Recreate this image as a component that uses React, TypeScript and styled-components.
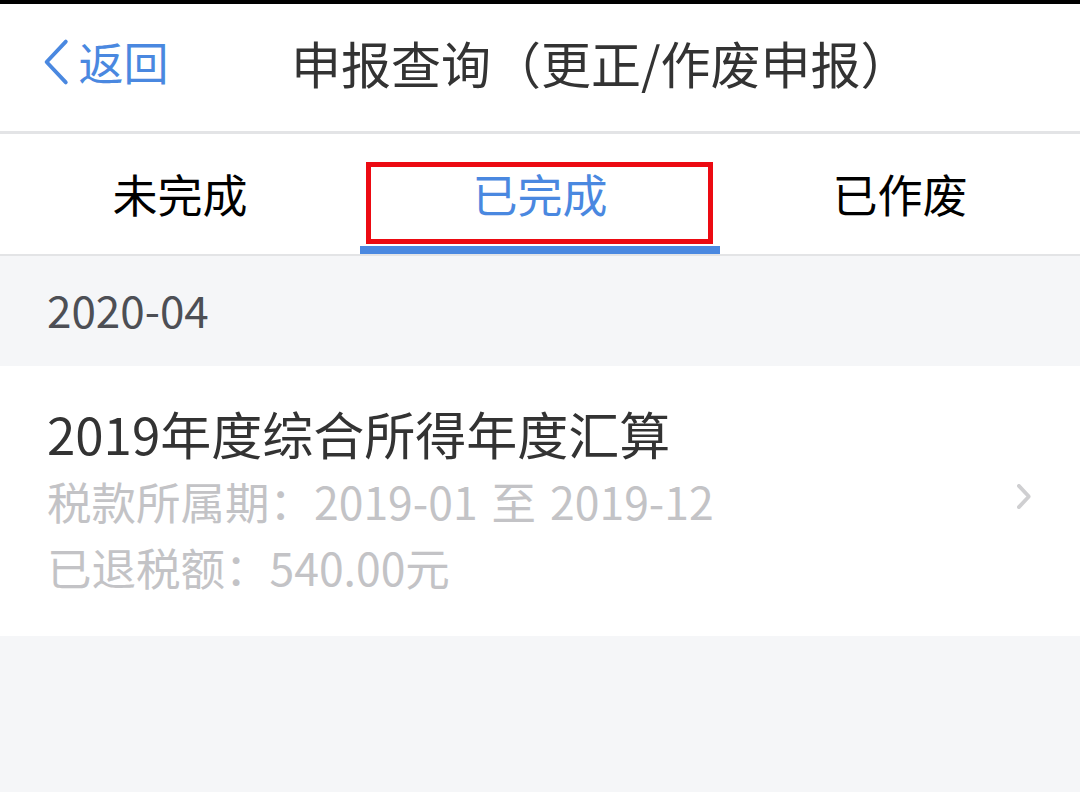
import React, { useState } from "react";
import styled, { createGlobalStyle } from "styled-components";

const colors = {
  black: "#000000",
  white: "#ffffff",
  blue: "#4a88e0",
  text: "#333333",
  date: "#4d4f55",
  muted: "#c3c3c6",
  line: "#e3e4e6",
  page: "#f5f6f8",
  red: "#ec0a12",
  chevron: "#cfcfd1",
};

const font = `"Noto Sans CJK SC", "Noto Sans", sans-serif`;

const GlobalStyle = createGlobalStyle`
  html, body {
    margin: 0;
    padding: 0;
    background: ${colors.page};
    font-family: ${font};
  }
`;

const Page = styled.div`
  width: 1080px;
  height: 792px;
  display: flex;
  flex-direction: column;
  background: ${colors.page};
  overflow: hidden;
`;

const StatusStrip = styled.div`
  height: 4px;
  background: ${colors.black};
`;

const Header = styled.header`
  height: 130px;
  display: flex;
  align-items: center;
  padding-bottom: 12px;
  box-sizing: border-box;
  background: ${colors.white};
  border-bottom: 3px solid ${colors.line};
`;

const Back = styled.button`
  width: 291px;
  display: flex;
  align-items: center;
  gap: 9px;
  padding: 0 0 0 43px;
  border: 0;
  background: none;
  color: ${colors.blue};
  font-family: ${font};
  font-size: 45px;
  line-height: 1;
  cursor: pointer;
`;

const Title = styled.h1`
  margin: 0;
  font-size: 50px;
  font-weight: 400;
  line-height: 1;
  color: ${colors.text};
  white-space: nowrap;
`;

const Tabs = styled.nav`
  height: 120px;
  display: grid;
  grid-template-columns: repeat(3, 1fr);
  background: ${colors.white};
  border-bottom: 2px solid ${colors.line};
`;

const Tab = styled.button<{ $active: boolean }>`
  position: relative;
  display: flex;
  align-items: center;
  justify-content: center;
  padding: 6px 0 0 0;
  border: 0;
  border-bottom: 8px solid ${(p) => (p.$active ? colors.blue : "transparent")};
  background: none;
  font-family: ${font};
  font-size: 45px;
  color: ${(p) => (p.$active ? colors.blue : colors.black)};
  cursor: pointer;
`;

const Highlight = styled.span`
  position: absolute;
  left: 6px;
  top: 28px;
  width: 347px;
  height: 82px;
  box-sizing: border-box;
  border: 5px solid ${colors.red};
  pointer-events: none;
`;

const Month = styled.div`
  height: 110px;
  display: flex;
  align-items: center;
  padding: 0 0 4px 47px;
  box-sizing: border-box;
  font-size: 44px;
  color: ${colors.date};
`;

const Card = styled.div`
  height: 270px;
  display: flex;
  align-items: center;
  background: ${colors.white};
  padding: 0 46px 0 47px;
  box-sizing: border-box;
`;

const CardBody = styled.div`
  flex: 1;
  display: flex;
  flex-direction: column;
  margin-top: -4px;
`;

const CardTitle = styled.div`
  font-size: 51px;
  line-height: 70px;
  color: ${colors.text};
`;

const Meta = styled.div`
  font-size: 44.5px;
  line-height: 66px;
  color: ${colors.muted};
  word-spacing: 4px;
`;

const Chevron = ({ color, size, width = 4 }: { color: string; size: number; width?: number }) => (
  <svg width={size * 0.55} height={size} viewBox="0 0 11 20" fill="none">
    <path d="M9.5 1.5 1.5 10l8 8.5" stroke={color} strokeWidth={width} strokeLinecap="round" strokeLinejoin="round" />
  </svg>
);

const RightChevron = styled.span`
  display: flex;
  transform: scaleX(-1);
  margin: -10px 3px 0 0;
`;

const tabs = ["未完成", "已完成", "已作废"];

export default function App() {
  const [active, setActive] = useState(1);

  return (
    <Page>
      <GlobalStyle />
      <StatusStrip />
      <Header>
        <Back type="button">
          <Chevron color={colors.blue} size={48} width={1.6} />
          返回
        </Back>
        <Title>申报查询（更正/作废申报）</Title>
      </Header>
      <Tabs>
        {tabs.map((label, i) => (
          <Tab key={label} type="button" $active={i === active} onClick={() => setActive(i)}>
            {label}
            {i === 1 && <Highlight />}
          </Tab>
        ))}
      </Tabs>
      <Month>2020-04</Month>
      <Card>
        <CardBody>
          <CardTitle>2019年度综合所得年度汇算</CardTitle>
          <Meta>税款所属期：2019-01 至 2019-12</Meta>
          <Meta>已退税额：540.00元</Meta>
        </CardBody>
        <RightChevron>
          <Chevron color={colors.chevron} size={25} width={3} />
        </RightChevron>
      </Card>
    </Page>
  );
}
